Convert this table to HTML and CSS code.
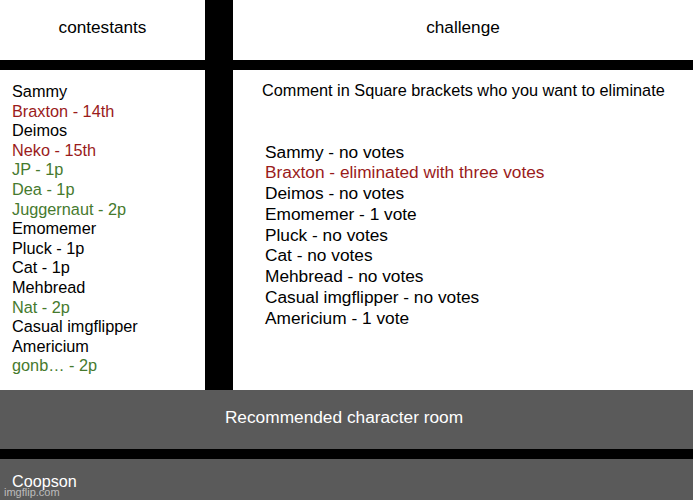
FILE: index.html
```html
<!DOCTYPE html>
<html>
<head>
<meta charset="utf-8">
<link rel="stylesheet" href="styles.css">
</head>
<body>
<div class="board">
  <div class="head">contestants</div>
  <div class="head">challenge</div>
  <div class="cell left">
    <div>Sammy</div>
    <div class="red">Braxton - 14th</div>
    <div>Deimos</div>
    <div class="red">Neko - 15th</div>
    <div class="green">JP - 1p</div>
    <div class="green">Dea - 1p</div>
    <div class="green">Juggernaut - 2p</div>
    <div>Emomemer</div>
    <div>Pluck - 1p</div>
    <div>Cat - 1p</div>
    <div>Mehbread</div>
    <div class="green">Nat - 2p</div>
    <div>Casual imgflipper</div>
    <div>Americium</div>
    <div class="green">gonb… - 2p</div>
  </div>
  <div class="cell right">
    <div class="prompt">Comment in Square brackets who you want to eliminate</div>
    <div class="votes">
      <div>Sammy - no votes</div>
      <div class="red">Braxton - eliminated with three votes</div>
      <div>Deimos - no votes</div>
      <div>Emomemer - 1 vote</div>
      <div>Pluck - no votes</div>
      <div>Cat - no votes</div>
      <div>Mehbread - no votes</div>
      <div>Casual imgflipper - no votes</div>
      <div>Americium - 1 vote</div>
    </div>
  </div>
</div>
<div class="room">Recommended character room</div>
<div class="divider"></div>
<div class="coop">
  <span>Coopson</span>
  <span class="mark">imgflip.com</span>
</div>
</body>
</html>
```
FILE: styles.css
```css
html, body {
  margin: 0;
  padding: 0;
  width: 693px;
  height: 500px;
  overflow: hidden;
  background: #000;
  font-family: "Liberation Sans", Arial, sans-serif;
  color: #000;
}
.board {
  display: grid;
  grid-template-columns: 205px 460px;
  grid-template-rows: 60px 320px;
  column-gap: 28px;
  row-gap: 10px;
  background: #000;
}
.head {
  background: #fff;
  display: flex;
  align-items: center;
  justify-content: center;
  font-size: 17.2px;
  padding-bottom: 6px;
  box-sizing: border-box;
}
.cell {
  background: #fff;
  box-sizing: border-box;
}
.left {
  padding: 12px 0 0 12px;
  font-size: 16.3px;
  line-height: 19.6px;
}
.right {
  padding: 11px 0 0 29px;
}
.prompt {
  font-size: 16.3px;
  line-height: 19.6px;
}
.votes {
  margin-top: 41px;
  padding-left: 3px;
  font-size: 17.3px;
  line-height: 20.75px;
}
.red { color: #9a1b1b; }
.green { color: #467a2e; }
.room {
  height: 59px;
  background: #5a5a5a;
  color: #fff;
  font-size: 17.3px;
  display: flex;
  align-items: center;
  justify-content: center;
  padding-bottom: 5px;
  padding-right: 5px;
  box-sizing: border-box;
}
.divider {
  height: 10px;
  background: #000;
}
.coop {
  position: relative;
  height: 41px;
  background: #5a5a5a;
  color: #fff;
  font-size: 16.2px;
  padding: 13px 0 0 12px;
  box-sizing: border-box;
}
.mark {
  position: absolute;
  left: 4px;
  bottom: 2px;
  font-size: 11px;
  color: rgba(255,255,255,0.6);
}
```
